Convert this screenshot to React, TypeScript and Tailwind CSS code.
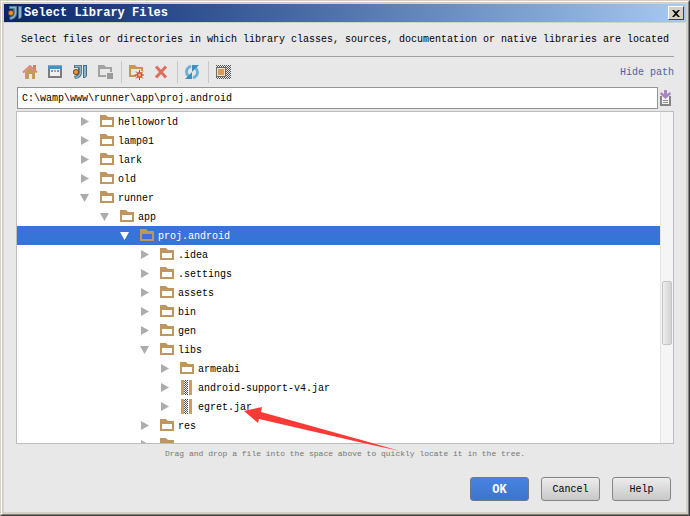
import React, { useState } from "react";

type Kind = "folder" | "jar";
type Row = { id: string; name: string; level: number; kind: Kind; open?: boolean };

const rows: Row[] = [
  { id: "helloworld", name: "helloworld", level: 0, kind: "folder" },
  { id: "lamp01", name: "lamp01", level: 0, kind: "folder" },
  { id: "lark", name: "lark", level: 0, kind: "folder" },
  { id: "old", name: "old", level: 0, kind: "folder" },
  { id: "runner", name: "runner", level: 0, kind: "folder", open: true },
  { id: "app", name: "app", level: 1, kind: "folder", open: true },
  { id: "proj", name: "proj.android", level: 2, kind: "folder", open: true },
  { id: "idea", name: ".idea", level: 3, kind: "folder" },
  { id: "settings", name: ".settings", level: 3, kind: "folder" },
  { id: "assets", name: "assets", level: 3, kind: "folder" },
  { id: "bin", name: "bin", level: 3, kind: "folder" },
  { id: "gen", name: "gen", level: 3, kind: "folder" },
  { id: "libs", name: "libs", level: 3, kind: "folder", open: true },
  { id: "armeabi", name: "armeabi", level: 4, kind: "folder" },
  { id: "support", name: "android-support-v4.jar", level: 4, kind: "jar" },
  { id: "egret", name: "egret.jar", level: 4, kind: "jar" },
  { id: "res", name: "res", level: 3, kind: "folder" },
  { id: "next", name: "", level: 3, kind: "folder" },
];

const indents = ["pl-[60px]", "pl-[80px]", "pl-[100px]", "pl-[120px]", "pl-[140px]"];

function Logo() {
  return (
    <svg width="16" height="16" viewBox="0 0 16 16" className="shrink-0">
      <path d="M2 1h8v7q0 6-7 7l-1-3q4-1 4-4V4H2z" fill="#4d7288" />
      <path d="M3 2.500h5.500V8q0 4-5 5.500" fill="none" stroke="#8fb2c5" strokeWidth="1.500" />
      <path d="M11 1h4v11l-2 2h-2z" fill="#4a6d82" />
      <path d="M12 2h2v10l-1 1h-1z" fill="#8fb3c6" />
      <circle cx="4" cy="8" r="3" fill="#6a4f3c" />
      <circle cx="4" cy="8" r="2" fill="#ff9420" />
    </svg>
  );
}

function HomeIcon() {
  return (
    <svg width="16" height="16" viewBox="0 0 16 16">
      <path d="M11 1h3v7h-3z" fill="#b98f56" />
      <path d="M3 8l5-5 5 5v7h-3v-5H7v5H3z" fill="#c69a5c" />
      <path d="M1 8.500L8 2l7 6.500" fill="none" stroke="#e08680" strokeWidth="2" />
    </svg>
  );
}

function DesktopIcon() {
  return (
    <svg width="16" height="16" viewBox="0 0 16 16">
      <path d="M2 5v8h12V5" fill="#f0f0f0" stroke="#7b7b7b" strokeWidth="2" />
      <path d="M1 1h14v4H1z" fill="#3f92c4" />
      <path d="M1 1h14v1H1z" fill="#6bb0d8" />
      <path d="M4 6h2v2H4zM10 6h2v2h-2z" fill="#5b9fc8" />
      <path d="M7 6h2v2H7z" fill="#d99a4e" />
    </svg>
  );
}

function ModuleIcon() {
  return (
    <svg width="16" height="16" viewBox="0 0 16 16">
      <path d="M9 12H2V4M14 8V5" fill="none" stroke="#a2a2a2" strokeWidth="2" />
      <path d="M1 1h6l2 2h6v3H1z" fill="#a2a2a2" />
      <path d="M3 5h10v1H3z" fill="#e8e8e8" />
      <path d="M10 9h6v6h-6z" fill="#9a9a9a" />
    </svg>
  );
}

function NewFolderIcon() {
  return (
    <svg width="16" height="16" viewBox="0 0 16 16">
      <path d="M8 12H2V4M14 7V4" fill="none" stroke="#c8954c" strokeWidth="2" />
      <path d="M1 1h6l2 2h6v2H1z" fill="#c8954c" />
      <path d="M11.500 6v10M6.500 11h10M8 7.500l7 7M15 7.500l-7 7" stroke="#c9402d" strokeWidth="1" />
      <circle cx="11.500" cy="11" r="3" fill="#d4533c" />
      <circle cx="11.500" cy="11" r="1.500" fill="#f0b06a" />
    </svg>
  );
}

function DeleteIcon() {
  return (
    <svg width="16" height="16" viewBox="0 0 16 16">
      <path d="M3 2.500l10 11M13 2.500l-10 11" stroke="#e06c60" strokeWidth="3" />
    </svg>
  );
}

function RefreshIcon() {
  return (
    <svg width="16" height="16" viewBox="0 0 16 16">
      <path d="M7 2Q2.500 4 2.500 8q0 2 2 4" fill="none" stroke="#6fb0d6" strokeWidth="3" />
      <path d="M1 15h7V8z" fill="#3c8fc0" />
      <path d="M9 14q4.500-2 4.500-6 0-2-2-4" fill="none" stroke="#6fb0d6" strokeWidth="3" />
      <path d="M15 1H8v7z" fill="#3c8fc0" />
    </svg>
  );
}

function HiddenIcon() {
  return (
    <svg width="16" height="16" viewBox="0 0 16 16">
      <defs>
        <pattern id="dither" width="2" height="2" patternUnits="userSpaceOnUse">
          <path d="M0 0h1v1H0zM1 1h1v1H1z" fill="#555" />
        </pattern>
      </defs>
      <path d="M1 1h15v14H1z" fill="url(#dither)" />
      <path d="M1 3h10v10H1z" fill="#6b6b6b" />
      <path d="M2 4h8v8H2z" fill="#f0dcc0" />
      <path d="M3 5h6v6H3z" fill="#d99c50" />
    </svg>
  );
}

function HistoryIcon() {
  return (
    <svg width="12" height="18" viewBox="0 0 12 18">
      <path d="M1 7v9h9V7" fill="#f4f4f4" stroke="#858585" strokeWidth="2" />
      <path d="M3 11h5v1H3zM3 13h5v1H3z" fill="#8d8d8d" />
      <path d="M4 1h3v4l3-2 1 2-5.500 5L0 5l1-2 3 2z" fill="#a886be" />
    </svg>
  );
}

function FolderIcon() {
  return (
    <svg width="14" height="13" viewBox="0 0 14 13" className="shrink-0">
      <path fillRule="evenodd" d="M0 0h6l2 2h6v10H0zM2 5v5h10V5z" fill="#bf9660" />
    </svg>
  );
}

function JarIcon() {
  return (
    <svg width="14" height="15" viewBox="0 0 14 15" className="shrink-0">
      <path d="M1 0h3v15H1zM9 0h3v15H9z" fill="#c99e6a" />
      <path d="M5.500 0v15M7.500 0v15" stroke="#444" strokeWidth="1" strokeDasharray="1 1" />
      <path d="M4.500 1v14M6.500 1v14" stroke="#666" strokeWidth="1" strokeDasharray="1 1" />
    </svg>
  );
}

function Chevron({ open, active }: { open?: boolean; active: boolean }) {
  return (
    <svg width="10" height="10" viewBox="0 0 10 10">
      <path d={open ? "M0 1h9L4.500 9z" : "M1 0l8 4.500-8 4.500z"} fill={active ? "#fff" : "#acacac"} />
    </svg>
  );
}

function Tool({ label, children }: { label: string; children: React.ReactNode }) {
  return (
    <button aria-label={label} className="flex h-4 w-[25px] items-center pl-1">
      {children}
    </button>
  );
}

function Divider() {
  return <span className="mr-0.5 ml-[3px] h-[22px] w-px bg-[#c8c8c8]" />;
}

const plain =
  "h-6 w-[59px] rounded-[3px] border border-[#858585] bg-linear-to-b from-[#ececec] to-[#c8c8c8] pt-px text-black";

export default function App() {
  const [selected, setSelected] = useState("proj");
  const [path, setPath] = useState("C:\\wamp\\www\\runner\\app\\proj.android");

  return (
    <div className="h-screen border border-t-[#d4d0c8] border-r-[#404040] border-b-[#404040] border-l-[#d4d0c8] font-['Liberation_Mono',monospace] text-[10px] leading-4 text-black">
      <div className="h-full border border-t-white border-r-[#808080] border-b-[#808080] border-l-white">
        <div className="flex h-full flex-col border-2 border-[#d4d0c8] bg-[#e8e8e8]">
          <header className="flex h-[19px] shrink-0 items-center border-b border-[#d4d0c8] bg-linear-to-r from-[#0a246a] to-[#a6caf0] pr-0.5 pl-[3px]">
            <Logo />
            <h1 className="ml-px flex-1 text-[12px] font-bold text-white">Select Library Files</h1>
            <button
              aria-label="Close"
              className="flex h-3.5 w-4 items-center justify-center border border-t-white border-r-[#404040] border-b-[#404040] border-l-white bg-[#d4d0c8]"
            >
              <svg width="8" height="7" viewBox="0 0 8 7">
                <path d="M0 0h2l2 2 2-2h2L5 3.500 8 7H6L4 5 2 7H0l3-3.500z" fill="#000" />
              </svg>
            </button>
          </header>

          <main className="flex min-h-0 flex-1 flex-col px-3">
            <p className="flex h-[34px] shrink-0 items-center justify-center border-b border-[#a0a0a0] whitespace-nowrap">
              Select files or directories in which library classes, sources, documentation or native
              libraries are located
            </p>

            <div className="flex h-[30px] shrink-0 items-center pl-0.5">
              <Tool label="Home"><HomeIcon /></Tool>
              <Tool label="Desktop"><DesktopIcon /></Tool>
              <Tool label="Project"><Logo /></Tool>
              <Tool label="Module"><ModuleIcon /></Tool>
              <Divider />
              <Tool label="New folder"><NewFolderIcon /></Tool>
              <Tool label="Delete"><DeleteIcon /></Tool>
              <Divider />
              <Tool label="Refresh"><RefreshIcon /></Tool>
              <Divider />
              <Tool label="Show hidden files"><HiddenIcon /></Tool>
              <a href="#path" className="ml-auto pt-0.5 text-[#5060a0]">Hide path</a>
            </div>

            <div className="flex h-[22px] shrink-0 items-center gap-0.5 pr-0.5 pl-px">
              <input
                id="path"
                aria-label="Path"
                value={path}
                onChange={(e) => setPath(e.target.value)}
                className="h-[22px] min-w-0 flex-1 border border-[#949494] bg-white px-1 outline-none"
              />
              <button aria-label="Path history"><HistoryIcon /></button>
            </div>

            <div className="relative mt-0.5 flex min-h-0 flex-1 border border-[#bdbdbd] bg-white">
              <ul role="tree" aria-label="Files" className="min-w-0 flex-1 overflow-hidden">
                {rows.map((r) => {
                  const active = r.id === selected;
                  return (
                    <li
                      key={r.id}
                      role="treeitem"
                      aria-selected={active}
                      aria-level={r.level + 1}
                      onClick={() => setSelected(r.id)}
                      className={`flex h-[19px] items-center ${indents[r.level]} ${
                        active ? "bg-[#3874d8] text-white" : ""
                      }`}
                    >
                      <button aria-label="Toggle" className="flex w-[23px] shrink-0 pl-[3px]">
                        <Chevron open={r.open} active={active} />
                      </button>
                      {r.kind === "folder" ? <FolderIcon /> : <JarIcon />}
                      <span className="ml-1 pt-0.5 whitespace-nowrap">{r.name}</span>
                    </li>
                  );
                })}
              </ul>
              <div className="flex w-[13px] flex-col border-l border-[#e4e4e4] bg-[#f5f5f5] px-px">
                <div className="grow-[169]" />
                <div className="h-16 rounded-[2px] border border-[#c4c4c4] bg-linear-to-r from-[#eeeeee] to-[#d2d2d2]" />
                <div className="grow-[98]" />
              </div>
              <svg
                width="156"
                height="46"
                viewBox="0 0 156 46"
                className="pointer-events-none absolute top-[294px] left-[227px] z-10"
              >
                <path d="M0 5L18 1l-1 5 104 29 35 10-37-8L15 13l-1 4z" fill="#fb3a37" />
              </svg>
            </div>

            <p className="flex h-[19px] shrink-0 items-center justify-center text-[8px] text-[#777]">
              Drag and drop a file into the space above to quickly locate it in the tree.
            </p>

            <div className="mt-[14px] mb-[11px] flex shrink-0 justify-end gap-3 pr-[3px]">
              <button className="h-6 w-[59px] rounded-[3px] border border-[#70788a] bg-linear-to-b from-[#4684e0] to-[#3d74cc] pt-px text-[12px] font-bold text-white">
                OK
              </button>
              <button className={plain}>Cancel</button>
              <button className={plain}>Help</button>
            </div>
          </main>
        </div>
      </div>
    </div>
  );
}
